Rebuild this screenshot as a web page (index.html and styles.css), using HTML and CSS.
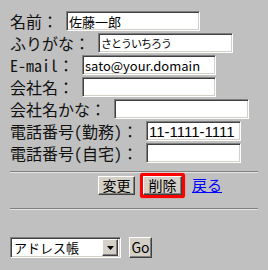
FILE: index.html
```html
<!DOCTYPE html>
<html lang="ja">
<head>
  <title>アドレス帳 - 編集</title>
  <meta charset="UTF-8">
  <link rel="stylesheet" href="styles.css">
</head>
<body>
  <form class="entry">
    <div class="row"><span class="label">名前：</span><input class="field w134" type="text" value="佐藤一郎"></div>
    <div class="row"><span class="label">ふりがな：</span><input class="field w135 kana" type="text" value="さとういちろう"></div>
    <div class="row"><span class="label">E-mail：</span><input class="field w134" type="text" value="sato@your.domain"></div>
    <div class="row"><span class="label">会社名：</span><input class="field w134" type="text" value=""></div>
    <div class="row"><span class="label">会社名かな：</span><input class="field w135 kana" type="text" value=""></div>
    <div class="row"><span class="label">電話番号(勤務)：</span><input class="field w95 tel" type="text" value="11-1111-1111"></div>
    <div class="row"><span class="label">電話番号(自宅)：</span><input class="field w95 tel" type="text" value=""></div>
    <hr class="rule">
    <div class="actions">
      <button type="button" class="btn btn-edit">変更</button>
      <button type="button" class="btn btn-delete">削除</button>
      <a class="back" href="#">戻る</a>
    </div>
    <hr class="rule">
  </form>
  <!-- ページ移動 -->
  <form class="jump">
    <div class="select">
      <select class="select-box">
        <option>アドレス帳</option>
      </select>
      <span class="select-arrow"><svg width="7" height="4" viewBox="0 0 7 4"><polygon points="0,0 7,0 3.5,4" fill="#000"/></svg></span>
    </div>
    <button type="button" class="btn btn-go">Go</button>
  </form>
</body>
</html>
```

FILE: styles.css
```css
* {
  box-sizing: border-box;
}
body {
  margin: 10px;
  background: #c0c0c0;
  color: #000;
  font-family: "Noto Sans Mono CJK JP", "Noto Sans CJK JP", sans-serif;
  font-size: 16px;
}
.row {
  display: flex;
  align-items: center;
  height: 22px;
}
.label {
  line-height: 22px;
  white-space: nowrap;
  color: #111;
}
/* くぼんだ入力欄 */
.field {
  height: 20px;
  margin: 0 0 0 8px;
  padding: 0 2px;
  background: #fff;
  border: 1px solid;
  border-color: #808080 #fff #fff #808080;
  box-shadow: inset 1px 1px #404040, inset -1px -1px #d4d0c8;
  font-family: "Noto Sans CJK JP", sans-serif;
  font-size: 13px;
  color: #000;
  outline: none;
}
.kana { font-size: 11px; letter-spacing: -1px; }
.tel { font-size: 15px; font-family: "Liberation Sans", "Noto Sans CJK JP", sans-serif; }
.w134 { width: 134px; }
.w135 { width: 135px; }
.w95 { width: 95px; }
.rule {
  height: 2px;
  margin: 7px 0 1px;
  border: 0;
  border-top: 1px solid #808080;
  border-bottom: 1px solid #e4e4e4;
}
.actions {
  display: flex;
  align-items: center;
  height: 22px;
  padding-left: 88px;
  margin-bottom: 12px;
}
.btn {
  height: 19px;
  padding: 0;
  background: #d4d0c8;
  border: 1px solid;
  border-color: #fff #404040 #404040 #fff;
  box-shadow: inset -1px -1px #808080;
  font-family: "Noto Sans CJK JP", sans-serif;
  font-size: 14px;
  line-height: 15px;
  color: #000;
}
.btn-edit { width: 37px; }
.btn-delete {
  width: 39px;
  margin-left: 8px;
  box-shadow: inset -1px -1px #808080, 0 0 0 3px #ff0000, 0 0 1px 3px #ff0000;
  border-radius: 1px;
}
.back {
  margin-left: 10px;
  color: #0000ff;
  font-family: "Noto Sans CJK JP", sans-serif;
  font-size: 15px;
  line-height: 18px;
  text-decoration: underline;
}
.jump {
  display: flex;
  align-items: center;
  margin-top: 27px;
}
.select {
  display: flex;
  align-items: center;
  width: 111px;
  height: 21px;
  background: #fff;
  border: 1px solid;
  border-color: #808080 #fff #fff #808080;
  box-shadow: inset 1px 1px #404040, inset -1px -1px #d4d0c8;
  padding: 2px;
}
.select-box {
  flex: 1;
  min-width: 0;
  height: 15px;
  padding: 0 1px;
  border: 0;
  background: #fff;
  -webkit-appearance: none;
  appearance: none;
  font-family: "Noto Sans CJK JP", sans-serif;
  font-size: 13px;
  line-height: 15px;
  color: #000;
  outline: none;
}
.select-arrow {
  display: flex;
  align-items: center;
  justify-content: center;
  width: 16px;
  height: 17px;
  background: #d4d0c8;
  border: 1px solid;
  border-color: #fff #404040 #404040 #fff;
  box-shadow: inset -1px -1px #808080;
}
.btn-go {
  height: 21px;
  width: 23px;
  margin-left: 8px;
}
```
